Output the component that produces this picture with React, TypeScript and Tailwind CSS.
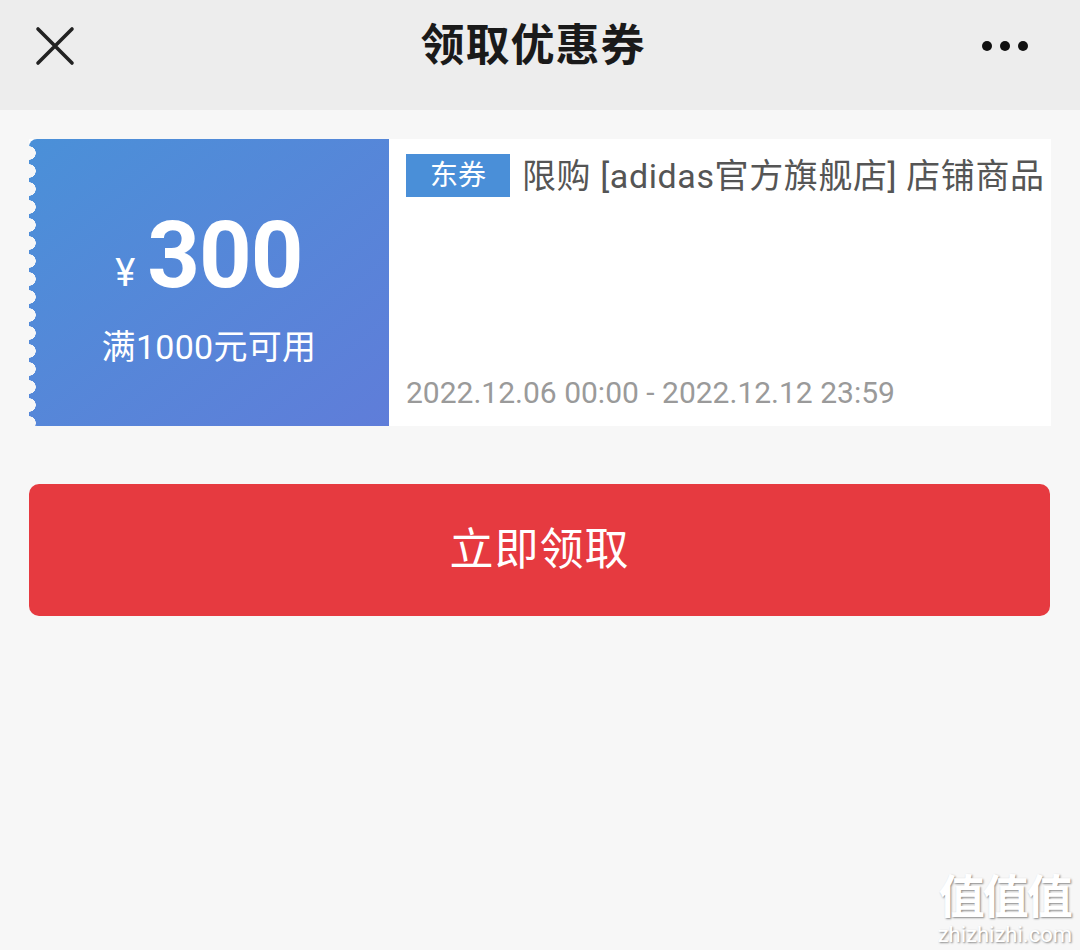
const font = "font-['Roboto','Noto_Sans_CJK_SC',sans-serif]";

function CloseIcon() {
  return (
    <svg width="40" height="40" viewBox="0 0 40 40" fill="none">
      <path d="M3 3 L37 37 M37 3 L3 37" stroke="#222" strokeWidth="3.6" strokeLinecap="round" />
    </svg>
  );
}

function MoreIcon() {
  return (
    <svg width="48" height="14" viewBox="0 0 48 14">
      <circle cx="6" cy="7" r="5" fill="#111" />
      <circle cx="24" cy="7" r="5" fill="#111" />
      <circle cx="42" cy="7" r="5" fill="#111" />
    </svg>
  );
}

function Header() {
  return (
    <div className="h-[110px] bg-[#ededed]">
      <div className="flex h-[92px] items-center justify-between pl-[35px] pr-[51px]">
        <CloseIcon />
        <h1 className={`${font} ml-[10px] text-[44px] font-bold leading-none text-[#1a1a1a] tracking-[1px]`}>
          领取优惠券
        </h1>
        <MoreIcon />
      </div>
    </div>
  );
}

function Coupon() {
  return (
    <div className="mx-[29px] mt-[29px] flex h-[287px] bg-white">
      <div className="relative flex w-[360px] flex-col items-center justify-center rounded-tl-[8px] rounded-bl-[8px] bg-linear-to-br from-[#4a90d8] to-[#5f7dd9] pt-[8px] text-white">
        {/* scalloped edge */}
        <div className="absolute left-0 top-[5px] bottom-0 w-[9px] bg-[radial-gradient(circle_at_0_9px,#f7f7f7_6.5px,transparent_7px)] bg-[length:9px_18px] bg-repeat-y" />
        <div className={`${font} flex items-end`}>
          <span className="mb-[10px] mr-[12px] text-[38px] leading-none">¥</span>
          <span className="text-[92px] font-bold leading-none tracking-[-1px]">300</span>
        </div>
        <div className={`${font} mt-[28px] text-[34px] leading-none tracking-[0.3px]`}>满1000元可用</div>
      </div>
      <div className="flex flex-1 flex-col justify-between pb-[18px] pl-[17px] pr-[4px] pt-[15px]">
        <div className="flex items-center">
          <span className={`${font} flex h-[43px] w-[104px] items-center justify-center bg-[#4a8fd8] text-[28px] leading-none text-white`}>
            东券
          </span>
          <span className={`${font} ml-[12px] whitespace-nowrap text-[34px] leading-none tracking-[0.6px] text-[#555]`}>
            限购 [adidas官方旗舰店] 店铺商品
          </span>
        </div>
        <div className={`${font} text-[30px] leading-none text-[#9a9a9a]`}>
          2022.12.06 00:00 - 2022.12.12 23:59
        </div>
      </div>
    </div>
  );
}

export default function App() {
  return (
    <div className="relative min-h-[950px] bg-[#f7f7f7]">
      <Header />
      <Coupon />
      <button className={`${font} mx-[29px] mt-[58px] flex h-[132px] w-[1021px] items-center justify-center rounded-[10px] bg-[#e63a40] text-[44px] leading-none text-white tracking-[1px]`}>
        立即领取
      </button>
      <div className="absolute bottom-[4px] right-[8px] flex flex-col items-center text-white [text-shadow:1px_1px_2px_#888]">
        <span className={`${font} text-[46px] font-bold leading-[46px] tracking-[-2px]`}>值值值</span>
        <span className={`${font} mt-[4px] text-[22px] leading-[22px]`}>zhizhizhi.com</span>
      </div>
    </div>
  );
}
